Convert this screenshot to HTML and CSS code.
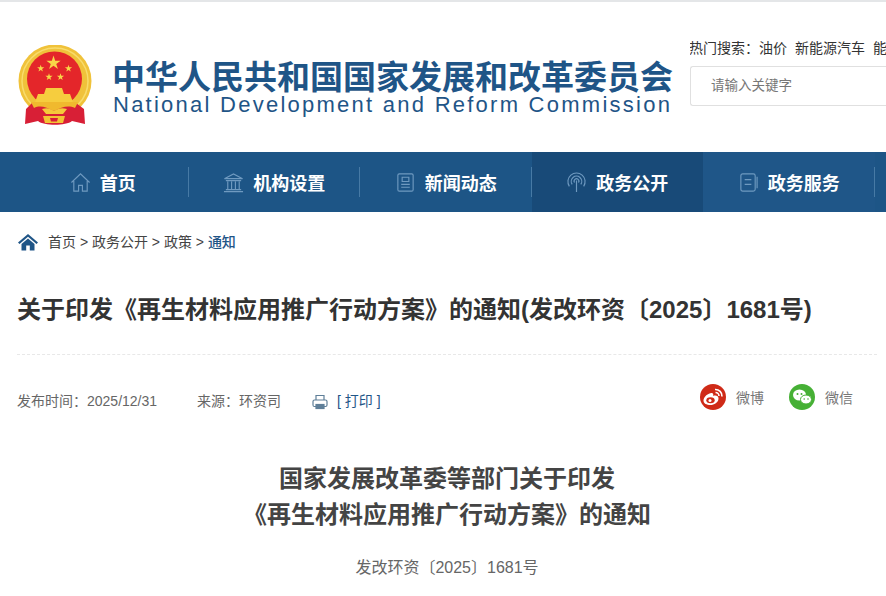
FILE: index.html
```html
<!DOCTYPE html>
<html lang="zh-CN">
<head>
    <meta charset="UTF-8">
    <title>关于印发《再生材料应用推广行动方案》的通知</title>
    <link rel="stylesheet" href="styles.css">
</head>
<body>
    <div class="header">
        <svg class="emblem" viewBox="0 0 74 80" width="74" height="80">
            <defs>
                <polygon id="star" points="0,-1 .225,-.31 .95,-.31 .365,.12 .59,.81 0,.38 -.59,.81 -.365,.12 -.95,-.31 -.225,-.31" fill="#f8d648"/>
            </defs>
            <circle cx="37" cy="36" r="36.500" fill="#f0c23a"/>
            <circle cx="37" cy="36" r="33" fill="none" stroke="#f8dc6c" stroke-width="1.500"/>
            <circle cx="36.500" cy="34" r="27.500" fill="#e4262a"/>
            <use href="#star" transform="translate(35.500 18) scale(7.500)"/>
            <use href="#star" transform="translate(22.700 23.500) scale(3.800)"/>
            <use href="#star" transform="translate(50.500 23.500) scale(3.800)"/>
            <use href="#star" transform="translate(31 32) scale(3.800)"/>
            <use href="#star" transform="translate(42.500 32) scale(3.800)"/>
            <path d="M28 43 H44 L46 49 H52 L56 60 H16 L20 49 H26 Z" fill="#f6cd3e"/>
            <path d="M8 64 L14 58 H58 L66 64 L67 79 L54 76 C48 81 26 81 20 76 L7 79 Z" fill="#d81f36"/>
            <path d="M13 57 H60 L57 63 C50 60 44 62 36 66 C28 62 22 60 16 63 Z" fill="#f0b92e"/>
            <path d="M24 64 C30 62 33 64 36 66 C39 64 43 62 49 64 L45 69 H28 Z" fill="#f5c93a"/>
            <path d="M25 71 H47 L45 78 H27 Z" fill="#f3c334"/>
            <path d="M32 73 H40 L39 76.500 H33 Z" fill="#d81f36"/>
        </svg>
        <div class="brand">
            <div class="brand-cn">中华人民共和国国家发展和改革委员会</div>
            <div class="brand-en">National Development and Reform Commission</div>
        </div>
        <div class="search">
            <div class="hot">热门搜索：<span>油价</span><span>新能源汽车</span>能</div>
            <div class="search-box">请输入关键字</div>
        </div>
    </div>

    <div class="nav">
        <div class="nav-item">
            <svg class="nav-icon" viewBox="0 0 22 22"><path d="M1.500 11 L11 2 L20.500 11 M4 9.500 V20 H9 V14 H13 V20 H18 V9.500"/></svg>
            首页
        </div>
        <div class="nav-item">
            <svg class="nav-icon" viewBox="0 0 22 22"><path d="M1.500 7 L11 2 L20.500 7 Z M3 9 H19 M5 10 V18 M9 10 V18 M13 10 V18 M17 10 V18 M3 18.500 H19 M1 20.500 H21"/></svg>
            机构设置
        </div>
        <div class="nav-item">
            <svg class="nav-icon" viewBox="0 0 22 22"><path d="M4.500 2 H17.500 Q19 2 19 3.500 V18.500 Q19 20 17.500 20 H4.500 Q3 20 3 18.500 V3.500 Q3 2 4.500 2 Z M7.500 5.500 H14.500 V10 H7.500 Z M6.500 13 H15.500 M6.500 16 H15.500"/></svg>
            新闻动态
        </div>
        <div class="nav-item active">
            <svg class="nav-icon" viewBox="0 0 22 22"><path d="M3.500 15 A9 9 0 1 1 18.500 15 M6.500 13 A5.500 5.500 0 1 1 15.500 13 M9 11 A2.500 2.500 0 1 1 13 11 M11 9 V21"/></svg>
            政务公开
        </div>
        <div class="nav-item lighter">
            <svg class="nav-icon" viewBox="0 0 22 22"><path d="M5 2 H16 Q18 2 18 4 V18 Q18 20 16 20 H5 Q3 20 3 18 V4 Q3 2 5 2 Z M7 8 H14 M7 13 H14 M20 5 V17"/></svg>
            政务服务
        </div>
    </div>

    <div class="content">
        <div class="crumbs">
            <svg class="crumb-home" viewBox="0 0 20 18" width="20" height="18"><path d="M10 1 L20 9.500 L18.500 11 L10 3.800 L1.500 11 L0 9.500 Z M3.500 11 L10 5.500 L16.500 11 V17.500 H11.800 V12.500 H8.200 V17.500 H3.500 Z"/></svg>
            <span>首页 &gt; 政务公开 &gt; 政策 &gt; </span><b>通知</b>
        </div>

        <h1 class="title">关于印发《再生材料应用推广行动方案》的通知(发改环资〔2025〕1681号)</h1>

        <div class="meta">
            <span class="date">发布时间：2025/12/31</span>
            <span class="source">来源：环资司</span>
            <svg class="print-icon" viewBox="0 0 16 16" width="16" height="16">
                <path d="M4 6 V1.500 H12 V6 M4 12.500 H2.500 Q1 12.500 1 11 V7.500 Q1 6 2.500 6 H13.500 Q15 6 15 7.500 V11 Q15 12.500 13.500 12.500 H12"/>
                <rect x="4" y="10.500" width="8" height="4" fill="#5f7f98"/>
            </svg>
            <span class="print">[ 打印 ]</span>
            <div class="share">
                <span class="share-dot weibo">
                    <svg viewBox="0 0 26 26" width="26" height="26">
                        <path d="M3.500 16.500 C3.500 12.500 9 8.500 12 9 C13.500 9.500 13.500 11 13 12 C15.500 11 18.500 11.500 18.500 14.500 C18.500 18.500 14 21 10.500 21 C6.500 21 3.500 19.500 3.500 16.500 Z" fill="#fff"/>
                        <ellipse cx="10.500" cy="16.200" rx="4.200" ry="3" fill="#cf2a17"/>
                        <circle cx="10" cy="16.500" r="1.500" fill="#fff"/>
                        <path d="M15 5.500 A6.500 6.500 0 0 1 22 12.500 M15.500 8.500 A3.500 3.500 0 0 1 19 12" fill="none" stroke="#fff" stroke-width="1.600"/>
                    </svg>
                </span>
                <span class="share-label">微博</span>
                <span class="share-dot wechat">
                    <svg viewBox="0 0 26 26" width="26" height="26">
                        <ellipse cx="10.500" cy="11" rx="6.500" ry="5.500" fill="#fff"/>
                        <ellipse cx="17" cy="15.500" rx="5.500" ry="4.500" fill="#fff" stroke="#46b035"/>
                        <circle cx="8.500" cy="10" r="1" fill="#46b035"/>
                        <circle cx="12.500" cy="10" r="1" fill="#46b035"/>
                        <circle cx="15.200" cy="15" r=".8" fill="#46b035"/>
                        <circle cx="19" cy="15" r=".8" fill="#46b035"/>
                    </svg>
                </span>
                <span class="share-label">微信</span>
            </div>
        </div>

        <h2 class="doc-title">国家发展改革委等部门关于印发<br>《再生材料应用推广行动方案》的通知</h2>
        <p class="doc-no">发改环资〔2025〕1681号</p>
    </div>
</body>
</html>
```

FILE: styles.css
```css
html, body {
    margin: 0;
    height: 596px;
    overflow: hidden;
}
body {
    width: 886px;
    background-color: #fff;
    font-family: "Liberation Sans", "Noto Sans CJK SC", sans-serif;
    color: #333;
}
.header {
    height: 150px;
    border-top: 2px solid #e4e6e8;
    display: flex;
    padding-left: 18px;
    white-space: nowrap;
}
.emblem {
    margin-top: 43px;
    flex-shrink: 0;
}
.brand {
    margin-left: 20px;
    margin-top: 56px;
    width: 560px;
    flex-shrink: 0;
    color: #1f5587;
}
.brand-cn {
    font-size: 33px;
    line-height: 35px;
    font-weight: 700;
    font-family: "Noto Sans CJK SC", sans-serif;
}
.brand-en {
    font-size: 22px;
    line-height: 24px;
    letter-spacing: 2.250px;
    margin-left: 1px;
}
.search {
    margin-left: 18px;
    margin-top: 37px;
    width: 196px;
    flex-shrink: 0;
    overflow: hidden;
}
.hot {
    font-size: 14px;
    line-height: 18px;
    color: #333;
    margin-left: -1px;
}
.hot span {
    margin-right: 8px;
}
.search-box {
    margin-top: 9px;
    height: 38px;
    line-height: 38px;
    border: 1px solid #e0e0e0;
    border-right: none;
    border-radius: 3px 0 0 3px;
    padding-left: 20px;
    font-size: 13.500px;
    color: #777;
}
.nav {
    height: 60px;
    background-color: #1d5586;
    display: flex;
    padding-left: 17px;
}
.nav-item {
    width: 171.500px;
    flex-shrink: 0;
    box-sizing: border-box;
    display: flex;
    align-items: center;
    justify-content: center;
    gap: 9px;
    color: #fff;
    font-size: 18px;
    font-weight: 700;
    font-family: "Noto Sans CJK SC", sans-serif;
    position: relative;
}
.nav-item::after {
    content: "";
    position: absolute;
    right: 0;
    top: 15px;
    height: 30px;
    width: 1px;
    background-color: #477aa5;
}
.nav-item.active {
    background-color: #184a78;
}
.nav-item.active::after {
    display: none;
}
.nav-item.lighter {
    background-color: #1f5688;
}
.nav-icon {
    width: 21px;
    height: 21px;
    fill: none;
    stroke: #6f9ac0;
    stroke-width: 1.200;
}
.content {
    padding: 0 9px 0 17px;
}
.crumbs {
    margin-top: 21px;
    height: 18px;
    display: flex;
    align-items: center;
    font-size: 14px;
    line-height: 18px;
    color: #444;
    white-space: pre;
}
.crumb-home {
    fill: #1f5587;
    margin-right: 10px;
    margin-left: 1px;
}
.crumbs b {
    color: #1f5587;
    font-weight: 500;
}
.title {
    margin: 44px 0 0;
    height: 59px;
    line-height: 30px;
    font-size: 24px;
    font-weight: 700;
    color: #333;
    white-space: nowrap;
    border-bottom: 1px dashed #e8e8e8;
}
.meta {
    margin-top: 31px;
    height: 28px;
    display: flex;
    align-items: center;
    font-size: 14px;
    color: #666;
    white-space: nowrap;
}
.date {
    margin-right: 40px;
}
.source {
    margin-right: 31px;
}
.print-icon {
    fill: none;
    stroke: #5f7f98;
    stroke-width: 1.200;
    margin-right: 9px;
    margin-top: 3px;
}
.print {
    color: #1f5587;
}
.share {
    margin-left: auto;
    margin-right: 15px;
    margin-top: -6px;
    display: flex;
    align-items: center;
}
.share-dot {
    width: 26px;
    height: 26px;
    border-radius: 50%;
    display: block;
}
.share-dot svg {
    display: block;
}
.weibo {
    background-color: #cf2a17;
}
.wechat {
    background-color: #46b035;
}
.share-label {
    margin-left: 10px;
    margin-right: 25px;
    color: #777;
}
.share-label:last-child {
    margin-right: 9px;
}
.doc-title {
    margin: 45px 0 0;
    text-align: center;
    font-size: 24px;
    line-height: 36px;
    font-weight: 700;
    color: #444;
    font-family: "Noto Sans CJK SC", sans-serif;
}
.doc-no {
    margin: 27px 0 0;
    text-align: center;
    font-size: 16px;
    line-height: 20px;
    color: #666;
}
```
